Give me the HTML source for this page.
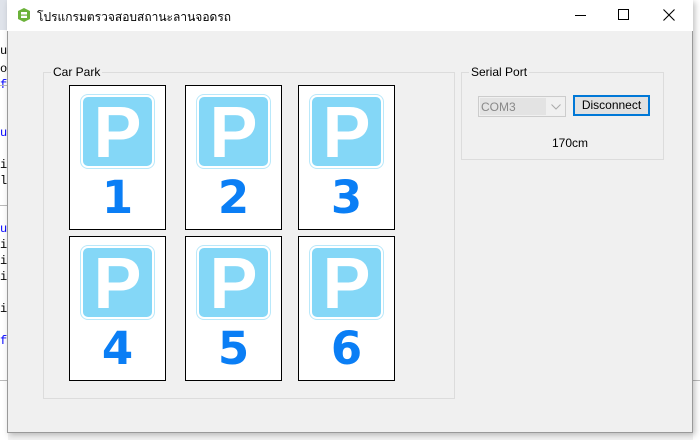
<!DOCTYPE html>
<html><head><meta charset="utf-8"><style>
*{margin:0;padding:0;box-sizing:border-box}
body{width:700px;height:440px;overflow:hidden;background:#f3f3f3;position:relative;font-family:"Liberation Sans",sans-serif;font-size:12px}
.code{position:absolute;left:0;font-family:"Liberation Mono",monospace;font-size:12px;color:#000}
.win{position:absolute;left:7px;top:0;width:686px;height:433px;background:#f0f0f0;border:1px solid #999;box-shadow:2px 2px 6px rgba(0,0,0,.25)}
.title{position:absolute;left:-1px;top:-1px;width:686px;height:31px;background:#fff}
.abs{position:absolute}
.grp{position:absolute;border:1px solid #dcdcdc}
.grp span{position:absolute;top:-8px;left:7px;background:#f0f0f0;padding:0 2px;color:#000}
.card{position:absolute;width:97px;height:145px;background:#fff;border:1px solid #000}
.sign{position:absolute;left:11px;top:9px;width:73px;height:73px;border-radius:7px;background:#84d7f7;border:2px solid #fff;box-shadow:0 0 0 1px #b9e8fa}
.sign b{position:absolute;left:0;right:0;top:-5px;text-align:center;color:#fff;font:bold 72px "Liberation Sans",sans-serif}
.num{position:absolute;left:0;right:0;top:85px;text-align:center;color:#0a7ef5;font:bold 45px "DejaVu Sans","Liberation Sans",sans-serif}
</style></head><body>
<div style="position:absolute;left:0;top:0;width:8px;height:440px;background:#fff"></div>
<div style="position:absolute;left:0;top:0;width:8px;height:30px;background:#dfe3ea"></div>
<div class="code" style="top:44px;color:#000">ut</div>
<div class="code" style="top:62px">or</div>
<div class="code" style="top:78px;color:#00f">f</div>
<div class="code" style="top:126px;color:#00f">ut</div>
<div class="code" style="top:158px">in</div>
<div class="code" style="top:174px">l.</div>
<div class="code" style="top:222px;color:#00f">ut</div>
<div class="code" style="top:238px">in</div>
<div class="code" style="top:254px">in</div>
<div class="code" style="top:270px">ic</div>
<div class="code" style="top:302px">ic</div>
<div class="code" style="top:334px;color:#00f">f</div>
<div style="position:absolute;left:0;top:85px;width:8px;height:1px;background:#bbb"></div>
<div style="position:absolute;left:0;top:205px;width:8px;height:1px;background:#bbb"></div>
<div style="position:absolute;left:0;top:380px;width:8px;height:1px;background:#bbb"></div>
<div style="position:absolute;left:693px;top:0;width:7px;height:440px;background:#fff"></div>
<div style="position:absolute;left:693px;top:380px;width:7px;height:1px;background:#bbb"></div>
<div class="win">
 <div class="title">
  <svg class="abs" style="left:10px;top:8px" width="14" height="14" viewBox="0 0 14 14"><polygon points="7,0 13,3 13,11 7,14 1,11 1,3" fill="#6bb23a"/><rect x="4" y="4" width="6" height="6" fill="#fff"/><rect x="4" y="6.5" width="6" height="1.2" fill="#6bb23a"/></svg>
  <div class="abs" style="left:30px;top:8px;font-family:'Liberation Sans','Noto Sans CJK SC',sans-serif;font-size:12px">โปรแกรมตรวจสอบสถานะลานจอดรถ</div>
  <div class="abs" style="left:568px;top:15px;width:11px;height:1px;background:#000"></div>
  <div class="abs" style="left:611px;top:9px;width:11px;height:11px;border:1px solid #000"></div>
  <svg class="abs" style="left:656px;top:9px" width="12" height="12"><path d="M0.5 0.5L11.5 11.5M11.5 0.5L0.5 11.5" stroke="#000" stroke-width="1.1"/></svg>
 </div>
 <div class="grp" style="left:35px;top:71px;width:412px;height:327px"><span>Car Park</span></div>
 <div class="card" style="left:61px;top:84px"><div class="sign"><b>P</b></div><div class="num">1</div></div>
 <div class="card" style="left:177px;top:84px"><div class="sign"><b>P</b></div><div class="num">2</div></div>
 <div class="card" style="left:290px;top:84px"><div class="sign"><b>P</b></div><div class="num">3</div></div>
 <div class="card" style="left:61px;top:235px"><div class="sign"><b>P</b></div><div class="num">4</div></div>
 <div class="card" style="left:177px;top:235px"><div class="sign"><b>P</b></div><div class="num">5</div></div>
 <div class="card" style="left:290px;top:235px"><div class="sign"><b>P</b></div><div class="num">6</div></div>
 <div class="grp" style="left:453px;top:71px;width:203px;height:88px"><span>Serial Port</span></div>
 <div class="abs" style="left:470px;top:95px;width:88px;height:21px;border:1px solid #ccc;background:#f0f0f0">
  <div class="abs" style="left:1px;top:1px;width:66px;height:17px;background:#e3e3e3;color:#888;padding:2px 1px">COM3</div>
  <svg class="abs" style="left:72px;top:7px" width="10" height="6"><path d="M0.5 0.5L5 5L9.5 0.5" stroke="#aaa" fill="none"/></svg>
 </div>
 <div class="abs" style="left:565px;top:94px;width:77px;height:21px;border:2px solid #0078d7;background:#e1e1e1;text-align:center;line-height:17px">Disconnect</div>
 <div class="abs" style="left:540px;top:135px;width:44px;text-align:center">170cm</div>
</div>
</body></html>
